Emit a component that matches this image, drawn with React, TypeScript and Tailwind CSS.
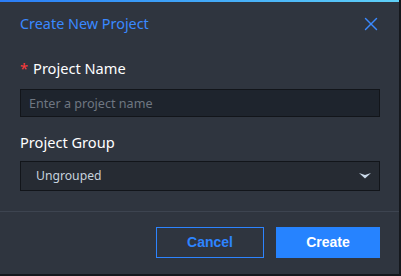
import { X } from "lucide-react";

export default function App() {
    return (
        <div className="w-[401px] h-[276px] bg-[#15181d] overflow-hidden">
            <div className="w-[399px] h-[274px] bg-[#2f353f] flex flex-col font-['Noto_Sans',sans-serif]">
                {/* top accent */}
                <div className="h-[2px] bg-gradient-to-r from-[#2b7cf6] to-[#5fd0f7]" />

                {/* header */}
                <div className="flex items-center justify-between pl-5 pr-[17px] h-[44px]">
                    <span className="text-[14.4px] text-[#3a89ff] leading-none">Create New Project</span>
                    <X className="w-[22px] h-[22px] text-[#3a89ff]" strokeWidth={1.5} />
                </div>

                {/* body */}
                <div className="flex flex-col px-5 pt-[12px]">
                    <label className="flex items-center text-[14.6px] text-white leading-none h-[20px]">
                        <span className="text-[#ff3b3b] mr-[5px]">*</span>
                        Project Name
                    </label>
                    <input
                        className="mt-[11px] h-[28px] w-[360px] bg-[#1e242d] border border-[#12151a] px-[8px] text-[12.6px] text-white placeholder:text-[#6f7782] outline-none"
                        placeholder="Enter a project name"
                    />
                    <label className="mt-[15px] text-[14.6px] text-white leading-none h-[20px] flex items-center">
                        Project Group
                    </label>
                    <div className="mt-[9px] h-[30px] w-[360px] bg-[#262b33] border border-[#12151a] flex items-center justify-between pl-[15px] pr-[8px]">
                        <span className="text-[12.2px] text-[#c6d2de]">Ungrouped</span>
                        <svg width="12" height="6" viewBox="0 0 12 6">
                            <path d="M0 0 L6 5.5 L12 0 L6 2 Z" fill="#c9d8e8" />
                        </svg>
                    </div>
                </div>

                {/* footer */}
                <div className="mt-[20px] border-t border-[#3d4450] flex justify-end gap-3 pr-[19px] pt-[15px]">
                    <button className="w-[108px] h-[31px] border border-[#2d84ff] text-[#2d84ff] text-[14px] font-bold font-['Liberation_Sans',sans-serif]">
                        Cancel
                    </button>
                    <button className="w-[104px] h-[31px] bg-[#2683ff] text-white text-[14px] font-bold font-['Liberation_Sans',sans-serif]">
                        Create
                    </button>
                </div>
            </div>
        </div>
    );
}
